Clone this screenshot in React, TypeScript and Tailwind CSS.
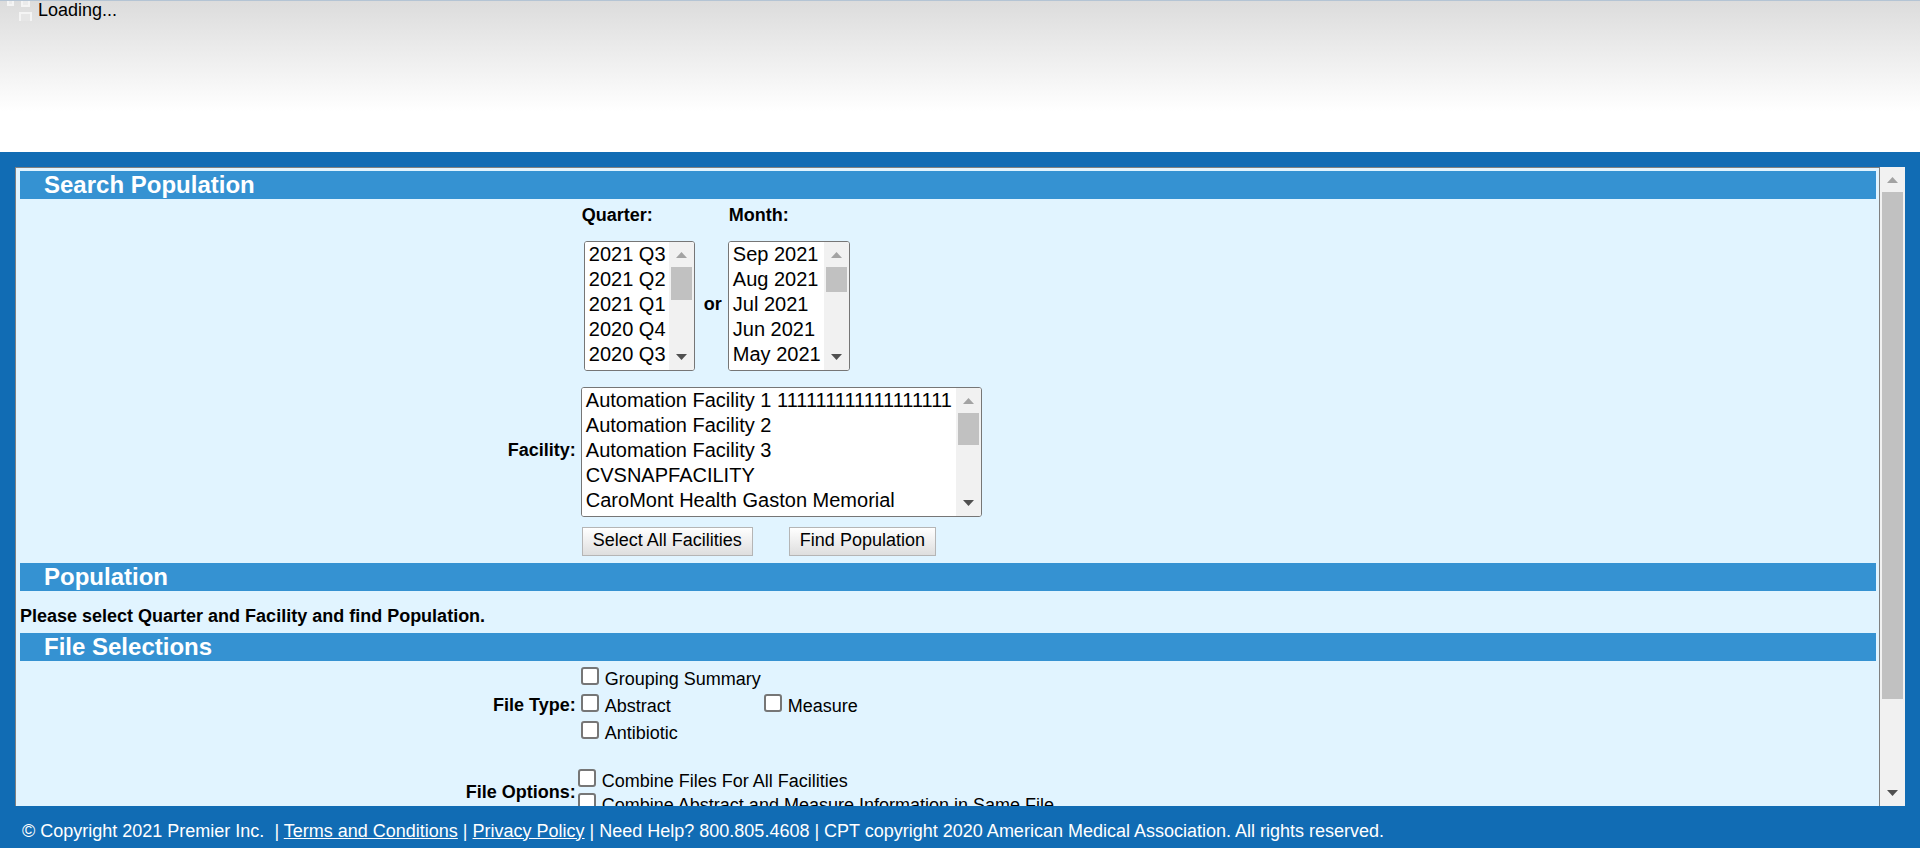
import React from "react";

const quarters = ["2021 Q3", "2021 Q2", "2021 Q1", "2020 Q4", "2020 Q3", "2020 Q2", "2020 Q1"];
const months = ["Sep 2021", "Aug 2021", "Jul 2021", "Jun 2021", "May 2021", "Apr 2021", "Mar 2021"];
const facilities = [
  "Automation Facility 1 111111111111111111",
  "Automation Facility 2",
  "Automation Facility 3",
  "CVSNAPFACILITY",
  "CaroMont Health Gaston Memorial",
];

function ScrollBar({ thumb }: { thumb: number }) {
  return (
    <div aria-hidden="true" className="flex w-[25px] shrink-0 flex-col bg-[#f1f1f1]">
      <svg className="h-[25px] w-[25px] shrink-0" viewBox="0 0 25 25">
        <path d="M7 16L12.5 10L18 16Z" fill="#a3a3a3" />
      </svg>
      <div className="min-h-0 flex-1 px-0.5">
        <div className="bg-[#c1c1c1]" style={{ height: `${thumb}%` }} />
      </div>
      <svg className="h-[25px] w-[25px] shrink-0" viewBox="0 0 25 25">
        <path d="M7 9L12.5 15L18 9Z" fill="#505050" />
      </svg>
    </div>
  );
}

function ListBox({ id, items, thumb, width }: { id: string; items: string[]; thumb: number; width: string }) {
  return (
    <div className={`flex h-[130px] overflow-hidden rounded-[3px] border border-[#767676] bg-white ${width}`}>
      <select
        id={id}
        multiple
        size={5}
        className="h-full min-w-0 flex-1 appearance-none overflow-y-auto bg-white pt-px pl-0.5 text-[20px] text-black outline-none [scrollbar-width:none]"
      >
        {items.map((t) => (
          <option key={t} className="h-[25px] px-0.5 py-0 leading-[25px]">
            {t}
          </option>
        ))}
      </select>
      <ScrollBar thumb={thumb} />
    </div>
  );
}

function SectionBar({ children }: { children: React.ReactNode }) {
  return (
    <h2 className="h-7 bg-[#3592d2] pl-6 text-[24px] leading-7 font-bold text-white">{children}</h2>
  );
}

function Check({ label }: { label: string }) {
  return (
    <label className="flex items-start gap-[6px] text-[18px] leading-[23px]">
      <input
        type="checkbox"
        className="h-[18px] w-[18px] shrink-0 appearance-none rounded-[3px] border-2 border-[#767676] bg-white checked:bg-[#0075ff]"
      />
      <span className="pt-px">{label}</span>
    </label>
  );
}

function PushButton({ children }: { children: React.ReactNode }) {
  return (
    <button
      type="button"
      className="h-[29px] border border-[#b5b5b5] bg-linear-to-b from-white to-[#dedede] px-[10px] pb-1 text-[18px] leading-6 text-black"
    >
      {children}
    </button>
  );
}

export default function App() {
  return (
    <div className="flex h-screen flex-col bg-[#116cb4] font-['Liberation_Sans',Arial,sans-serif] text-[18px] text-black">
      <header className="h-[152px] shrink-0 border-t border-[#b4c4d4] bg-linear-to-b from-[#dcdcdc] to-white to-[110px]">
        <div className="flex items-start gap-[6px]">
          <svg className="h-5 w-8" viewBox="0 0 32 20" fill="#ebebeb" stroke="#f4f4f4" strokeWidth="2">
            <path d="M8 -2H13V4H8ZM22 -2H29V5H22Z" />
            <path d="M20 20V12H31V20" fill="#e6e6e6" />
          </svg>
          <span className="leading-[18px]">Loading...</span>
        </div>
      </header>

      <main className="flex min-h-0 flex-1 px-[15px] pt-[15px]">
        <div className="min-w-0 flex-1 overflow-y-auto border border-b-0 border-[#808080] bg-[#e1f4ff] pt-[3px] pr-[3px] pl-1 [scrollbar-width:none]">
          <SectionBar>Search Population</SectionBar>
          <div className="grid grid-cols-[30%_1fr] gap-x-1 pt-1 pb-[7px]">
            <div className="col-start-2 flex pb-[14px] pl-px leading-6 font-bold">
              <label htmlFor="quarter" className="w-[147px]">Quarter:</label>
              <label htmlFor="month">Month:</label>
            </div>
            <div className="col-start-2 flex items-center pb-4 pl-[3px]">
              <ListBox id="quarter" items={quarters} thumb={42} width="w-[111px]" />
              <span className="pr-[6px] pb-1 pl-[9px] font-bold">or</span>
              <ListBox id="month" items={months} thumb={32} width="w-[122px]" />
            </div>
            <label htmlFor="facility" className="self-center pr-px pb-1 text-right font-bold">Facility:</label>
            <ListBox id="facility" items={facilities} thumb={41} width="w-[401px]" />
            <div className="col-start-2 flex gap-9 pt-[10px] pl-px">
              <PushButton>Select All Facilities</PushButton>
              <PushButton>Find Population</PushButton>
            </div>
          </div>

          <SectionBar>Population</SectionBar>
          <p className="pt-[13px] pb-[5px] leading-6 font-bold">
            Please select Quarter and Facility and find Population.
          </p>

          <SectionBar>File Selections</SectionBar>
          <div className="grid grid-cols-[30%_1fr] gap-x-1 pt-[6px]">
            <span className="self-center pr-px pb-px text-right font-bold">File Type:</span>
            <div className="grid w-fit grid-cols-[183px_auto] gap-y-[3px]">
              <div className="col-span-2"><Check label="Grouping Summary" /></div>
              <Check label="Abstract" />
              <Check label="Measure" />
              <Check label="Antibiotic" />
            </div>
          </div>
          <div className="grid grid-cols-[30%_1fr] gap-x-px pt-6">
            <span className="self-center pr-px pb-px text-right font-bold">File Options:</span>
            <div className="flex flex-col items-start">
              <Check label="Combine Files For All Facilities" />
              <Check label="Combine Abstract and Measure Information in Same File" />
            </div>
          </div>
        </div>
        <ScrollBar thumb={86} />
      </main>

      <footer className="flex h-[42px] shrink-0 items-center pl-[22px] text-white">
        <p className="whitespace-pre pt-2">
          © Copyright 2021 Premier Inc.{"  "}| <a href="#terms" className="underline">Terms and Conditions</a> |{" "}
          <a href="#privacy" className="underline">Privacy Policy</a> | Need Help? 800.805.4608 | CPT copyright 2020
          American Medical Association. All rights reserved.
        </p>
      </footer>
    </div>
  );
}
